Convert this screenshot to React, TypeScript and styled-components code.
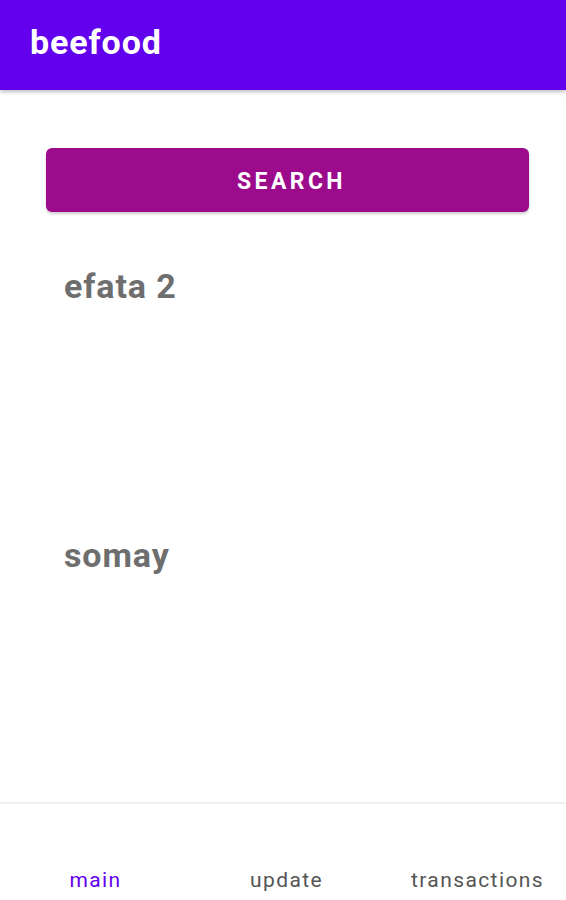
import styled, { createGlobalStyle } from "styled-components";

const GlobalStyle = createGlobalStyle`
  html, body {
    margin: 0;
    padding: 0;
    background: #ffffff;
    font-family: Roboto, "Noto Sans", sans-serif;
  }
`;

const Screen = styled.div`
  width: 566px;
  height: 900px;
  display: flex;
  flex-direction: column;
  background: #fff;
  overflow: hidden;
`;

const AppBar = styled.header`
  height: 90px;
  background: #6200ee;
  display: flex;
  align-items: center;
  padding: 0 30px 6px;
  box-sizing: border-box;
  box-shadow: 0 2px 4px rgba(0, 0, 0, 0.25);
  position: relative;
  z-index: 1;
`;

const Title = styled.h1`
  margin: 0;
  color: #fff;
  font-size: 34px;
  font-weight: 700;
  letter-spacing: 0.9px;
`;

const Content = styled.main`
  flex: 1;
  padding: 58px 37px 0 46px;
  display: flex;
  flex-direction: column;
`;

const SearchButton = styled.button`
  height: 64px;
  width: 483px;
  border: none;
  border-radius: 6px;
  background: #9c0b8c;
  color: #fff;
  font-family: Roboto, sans-serif;
  font-size: 23px;
  font-weight: 700;
  letter-spacing: 3.4px;
  padding: 2px 0 0 8px;
  box-shadow: 0 2px 3px rgba(0, 0, 0, 0.2);
`;

const Places = styled.div`
  display: flex;
  flex-direction: column;
  gap: 229px;
  padding: 54px 0 0 18px;
`;

const PlaceName = styled.div`
  color: #6e6e6e;
  font-size: 34px;
  font-weight: 700;
  letter-spacing: 0.9px;
  line-height: 40px;
`;

const BottomNav = styled.nav`
  height: 98px;
  border-top: 2px solid #f0f0f0;
  display: grid;
  grid-template-columns: repeat(3, 191px);
  align-items: end;
  padding-bottom: 7px;
  box-sizing: border-box;
`;

const NavItem = styled.div<{ $active?: boolean }>`
  text-align: center;
  font-size: 21px;
  letter-spacing: 1.4px;
  color: ${(p) => (p.$active ? "#6200ee" : "#555555")};
  line-height: 26px;
`;

export default function App() {
  return (
    <>
      <GlobalStyle />
      <Screen>
        <AppBar>
          <Title>beefood</Title>
        </AppBar>
        <Content>
          <SearchButton>SEARCH</SearchButton>
          <Places>
            <PlaceName>efata 2</PlaceName>
            <PlaceName>somay</PlaceName>
          </Places>
        </Content>
        <BottomNav>
          <NavItem $active>main</NavItem>
          <NavItem>update</NavItem>
          <NavItem>transactions</NavItem>
        </BottomNav>
      </Screen>
    </>
  );
}
